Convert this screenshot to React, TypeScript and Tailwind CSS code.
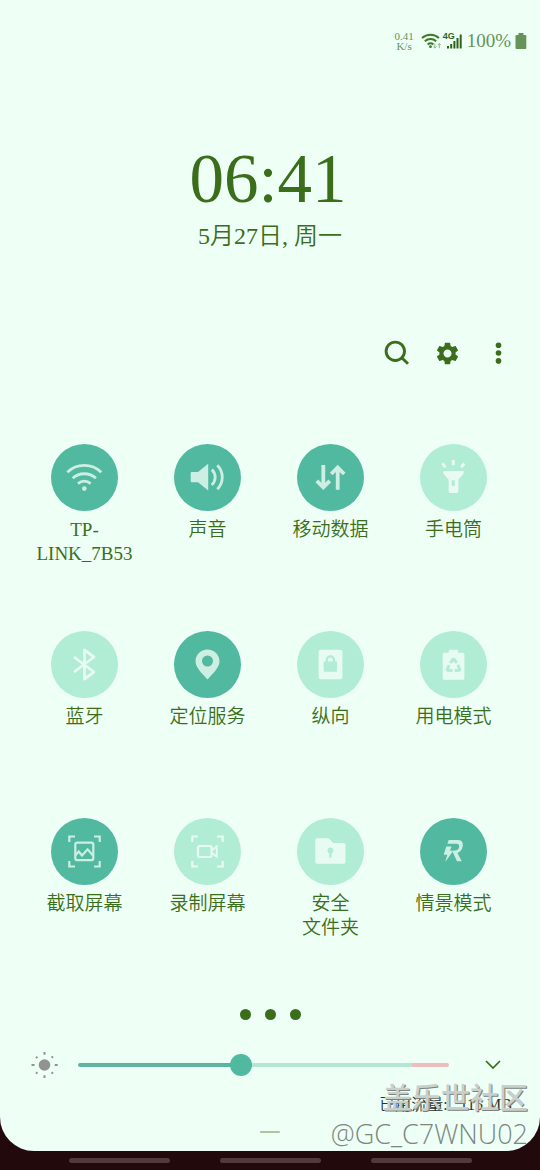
import React, { useState } from 'react';
import { MdSettings } from 'react-icons/md';

interface Tile {
  id: string;
  label: string[];
  active: boolean;
  icon: React.ReactNode;
}

const ON = '#51b9a0';
const OFF = '#b1ecd4';

const tiles: Tile[] = [
  {
    id: 'wifi',
    label: ['TP-', 'LINK_7B53'],
    active: true,
    icon: (
      <>
        <g fill="none" stroke="currentColor" strokeWidth="2.8">
          <path d="M16.3 28.3a24.5 24.5 0 0 1 34 0" />
          <path d="M21.7 34.3a17 17 0 0 1 23.2 0" />
          <path d="M27 39.6a9.5 9.5 0 0 1 12.6 0" />
        </g>
        <circle cx="33.3" cy="44.6" r="2.3" fill="currentColor" />
      </>
    ),
  },
  {
    id: 'sound',
    label: ['声音'],
    active: true,
    icon: (
      <>
        <path d="M17.7 28H24L34.2 19.8V46.5L24 38.3H17.7a1 1 0 0 1-1-1V29a1 1 0 0 1 1-1Z" fill="currentColor" />
        <g fill="none" stroke="currentColor" strokeWidth="2.8">
          <path d="M37.8 25.6a10.5 10.5 0 0 1 0 15.4" />
          <path d="M43.3 21.3a17 17 0 0 1 0 24" />
        </g>
      </>
    ),
  },
  {
    id: 'data',
    label: ['移动数据'],
    active: true,
    icon: (
      <g fill="none" stroke="currentColor" strokeWidth="3.8">
        <path d="M26.3 21v23M19.8 36.8l6.5 6.6 6.5-6.6" />
        <path d="M40.7 45.8v-23M34.2 30l6.5-6.6 6.5 6.6" />
      </g>
    ),
  },
  {
    id: 'torch',
    label: ['手电筒'],
    active: false,
    icon: (
      <>
        <path
          fillRule="evenodd"
          d="M23.8 27h19.4q.5 0 .5.6v1.2q0 1-.8 1.8L38.4 35.6V47q0 2-2 2h-5.8q-2 0-2-2V35.6L24.1 30.6q-.8-.8-.8-1.8v-1.2q0-.6.5-.6ZM31.7 36.3v5.7h3v-5.7Z"
          fill="currentColor"
        />
        <path d="M33.3 16v5.3M22.4 19.3l3 4M44.2 19.3l-3 4" stroke="currentColor" strokeWidth="2.8" />
      </>
    ),
  },
  {
    id: 'bluetooth',
    label: ['蓝牙'],
    active: false,
    icon: (
      <path
        d="M23 26 43 41 33.5 48V19L43 26 23 41"
        fill="none"
        stroke="currentColor"
        strokeWidth="2.8"
        strokeLinejoin="round"
      />
    ),
  },
  {
    id: 'location',
    label: ['定位服务'],
    active: true,
    icon: (
      <path
        fillRule="evenodd"
        d="M33.5 18.5c-6.8 0-12 5.2-12 11.7C21.5 37 29 43 33.5 48.5 38 43 45.5 37 45.5 30.2c0-6.5-5.2-11.7-12-11.7Zm0 6a5.5 5.5 0 1 1 0 11 5.5 5.5 0 0 1 0-11Z"
        fill="currentColor"
      />
    ),
  },
  {
    id: 'portrait',
    label: ['纵向'],
    active: false,
    icon: (
      <>
        <rect x="21.6" y="18.7" width="23.8" height="29.5" rx="1.8" fill="currentColor" />
        <rect x="26.7" y="30.6" width="13.4" height="10.2" rx="1" fill={OFF} />
        <path d="M29.9 31.5v-2.7a3.5 3.5 0 0 1 7 0v2.7" fill="none" stroke={OFF} strokeWidth="2.2" />
      </>
    ),
  },
  {
    id: 'power',
    label: ['用电模式'],
    active: false,
    icon: (
      <>
        <path
          d="M28.7 21.7v-2q0-1 1-1h7.4q1 0 1 1v2h4.8q1.5 0 1.5 1.5v24q0 1.5-1.5 1.5H24.2q-1.5 0-1.5-1.5v-24q0-1.5 1.5-1.5Z"
          fill="currentColor"
        />
        <g fill="none" stroke={OFF} strokeWidth="3" strokeLinejoin="round">
          <path d="M30.2 32.2 33 28.2h1l2.7 3.8" />
          <path d="M30.2 32.2 33 28.2h1l2.7 3.8" transform="rotate(120 33.5 35.2)" />
          <path d="M30.2 32.2 33 28.2h1l2.7 3.8" transform="rotate(240 33.5 35.2)" />
        </g>
      </>
    ),
  },
  {
    id: 'screenshot',
    label: ['截取屏幕'],
    active: true,
    icon: (
      <g fill="none" stroke="currentColor" strokeWidth="2.2">
        <path d="M18.3 24v-5.5H24M43 18.5h5.7V24M18.3 43v5.5H24M43 48.5h5.7V43" />
        <rect x="24.3" y="24.6" width="18" height="17.6" rx="2" />
        <path d="m24.5 37.3 3.2-3.8 3.3 4 5.6-6.2 5.6 6.5" />
      </g>
    ),
  },
  {
    id: 'record',
    label: ['录制屏幕'],
    active: false,
    icon: (
      <>
        <g fill="none" stroke="currentColor" strokeWidth="2.2">
          <path d="M18.3 24v-5.5H24M43 18.5h5.7V24M18.3 43v5.5H24M43 48.5h5.7V43" />
          <rect x="24" y="28" width="13.6" height="11" rx="1.8" />
        </g>
        <path d="M38 32.2 42.8 28.3v10.4L38 35" fill="none" stroke="currentColor" strokeWidth="1.8" />
      </>
    ),
  },
  {
    id: 'folder',
    label: ['安全', '文件夹'],
    active: false,
    icon: (
      <>
        <path
          d="M20 20.3h10.7q.8 0 1.4.5l4.2 4.2h10.5q1.7 0 1.7 1.7v17.3q0 1.7-1.7 1.7H20q-1.7 0-1.7-1.7V22q0-1.7 1.7-1.7Z"
          fill="currentColor"
        />
        <circle cx="33.4" cy="32.5" r="2.9" fill={OFF} />
        <path d="M33.4 33v6.6" stroke={OFF} strokeWidth="2.5" />
      </>
    ),
  },
  {
    id: 'routine',
    label: ['情景模式'],
    active: true,
    icon: (
      <g fill="currentColor">
        <path d="M28.7 22H37.5q5.7 0 5.3 5.3-.4 5.8-5.3 7.7L41.7 43.3H37L32.6 33.7 33.6 32.4H35.6q3.3-.4 3.6-4 .1-2.6-2.6-2.6H27.4Z" />
        <path d="M26.3 28.5H31.5L30 32.7H33.3L25.2 44 27.3 36.8H23.7Z" />
      </g>
    ),
  },
];

const StatusBar: React.FC = () => (
  <div className="flex h-[82px] items-center justify-end pr-[13px] text-[#649457]">
    <div className="mr-[7px] text-center text-[11px] leading-[10px]">
      <div>0.41</div>
      <div>K/s</div>
    </div>
    <svg width="22" height="18" viewBox="0 0 22 18" fill="none" stroke="#3d7a24" strokeWidth="2">
      <path d="M1 6a12.5 12.5 0 0 1 17 0M3.8 9.3a8.5 8.5 0 0 1 11.4 0M6.6 12.4a4.5 4.5 0 0 1 5.8 0" />
      <circle cx="9.5" cy="14.7" r="1.4" fill="#3d7a24" stroke="none" />
      <path
        d="M13.8 11.5v4.5M12.3 14.5l1.5 1.7 1.5-1.7M18.3 16.2v-4.5M16.8 13.2l1.5-1.7 1.5 1.7"
        stroke="#8fb888"
        strokeWidth="1"
      />
    </svg>
    <div className="relative h-[18px] w-5">
      <span className="absolute left-0 top-0 font-['Liberation_Sans'] text-[9px] leading-[9px] font-bold text-[#316317]">
        4G
      </span>
      <svg width="20" height="18" viewBox="0 0 20 18" fill="#316317">
        <path d="M4 14h2v2.5H4zM7.2 12h2v4.5h-2zM10.4 9h2v7.5h-2zM13.5 6h2v10.5h-2zM16.7 2.5h2v14h-2z" />
      </svg>
    </div>
    <span className="ml-1 text-[19px] leading-6">100%</span>
    <svg className="ml-1" width="12" height="18" viewBox="0 0 12 18" fill="currentColor">
      <path d="M3.5 1h5v2h1.8q1 0 1 1v12q0 1-1 1H1.5q-1 0-1-1V4q0-1 1-1h2Z" />
    </svg>
  </div>
);

const QuickTile: React.FC<{ tile: Tile; active: boolean; onToggle: () => void }> = ({ tile, active, onToggle }) => (
  <button type="button" aria-pressed={active} onClick={onToggle} className="flex flex-col items-center gap-[7px]">
    <span
      className={`block size-[67px] rounded-full ${active ? 'text-[#cdeee3]' : 'text-[#e8fbf3]'}`}
      style={{ backgroundColor: active ? ON : OFF }}
    >
      <svg viewBox="0 0 67 67" className="size-full">
        {tile.icon}
      </svg>
    </span>
    <span className="min-h-12 text-[19px] leading-6 font-[350] whitespace-nowrap">
      {tile.label.map((line) => (
        <span key={line} className="block">
          {line}
        </span>
      ))}
    </span>
  </button>
);

export default function App() {
  const [active, setActive] = useState<Record<string, boolean>>(
    Object.fromEntries(tiles.map((t) => [t.id, t.active]))
  );
  const [brightness, setBrightness] = useState(43.5);

  const track = `linear-gradient(to right, #5bb5a0 ${brightness}%, #b3e7d4 ${brightness}%, #b3e7d4 90%, #f0bdbd 90%)`;

  return (
    <div className="relative flex min-h-screen flex-col bg-[#21090c] font-['Liberation_Serif','Noto_Sans_CJK_SC',serif] text-[#3a6e1a]">
      <main className="flex-1 rounded-b-[34px] bg-[#eefff6]">
        <StatusBar />

        {/* Clock */}
        <header className="mt-[63px] pr-1 text-center">
          <h1 className="text-[69px] leading-[68px]">06:41</h1>
          <p className="mt-[7px] pl-1 text-[24px] leading-8 font-[350]">5月27日, 周一</p>
        </header>

        <div className="mt-[77px] flex justify-end pr-4">
          <button type="button" aria-label="搜索" className="flex h-12 w-[51px] items-center justify-center">
            <svg width="28" height="28" viewBox="0 0 28 28" fill="none" stroke="currentColor" strokeWidth="2.9">
              <circle cx="12.3" cy="12.3" r="9.2" />
              <path d="m18.7 18.7 6.3 6" />
            </svg>
          </button>
          <button type="button" aria-label="设置" className="flex h-12 w-[51px] items-center justify-center">
            <MdSettings size={27} />
          </button>
          <button type="button" aria-label="更多" className="flex h-12 w-[51px] items-center justify-center">
            <svg width="28" height="28" viewBox="0 0 28 28" fill="currentColor">
              <circle cx="13.5" cy="6.3" r="2.8" />
              <circle cx="13.5" cy="14" r="2.8" />
              <circle cx="13.5" cy="21.9" r="2.8" />
            </svg>
          </button>
        </div>

        {/* Quick settings */}
        <div className="mt-[67px] grid grid-cols-4 gap-y-[65px] pr-[25px] pl-[23px]">
          {tiles.map((tile) => (
            <QuickTile
              key={tile.id}
              tile={tile}
              active={active[tile.id]}
              onToggle={() => setActive((prev) => ({ ...prev, [tile.id]: !prev[tile.id] }))}
            />
          ))}
        </div>

        <div className="mt-[69px] flex justify-center gap-[14px]">
          <span className="size-[11px] rounded-full bg-current" />
          <span className="size-[11px] rounded-full bg-current" />
          <span className="size-[11px] rounded-full bg-current" />
        </div>

        {/* Brightness */}
        <div className="mt-[25px] flex h-10 items-center pr-8 pl-[31px]">
          <svg width="28" height="28" viewBox="0 0 28 28" fill="#929292" stroke="#929292" strokeWidth="2">
            <circle cx="13.5" cy="14" r="5.8" stroke="none" />
            <path d="M13.5 1v2.8M13.5 24.2V27M.5 14h3M23.7 14h3M5 5.7l1.4 1.4M20.6 21.2l1.4 1.4M22 5.4l-1.4 1.4M6.4 21.2 5 22.6" />
          </svg>
          <input
            type="range"
            aria-label="亮度"
            min={0}
            max={100}
            step={0.5}
            value={brightness}
            onChange={(e) => setBrightness(Number(e.target.value))}
            style={{ background: track }}
            className="ml-[19px] h-1 min-w-0 flex-1 appearance-none rounded-full [&::-webkit-slider-thumb]:size-[22px] [&::-webkit-slider-thumb]:appearance-none [&::-webkit-slider-thumb]:rounded-full [&::-webkit-slider-thumb]:bg-[#51b9a0]"
          />
          <button type="button" aria-label="展开" className="ml-7 flex h-10 w-[31px] items-center justify-center">
            <svg width="18" height="12" viewBox="0 0 18 12" fill="none" stroke="currentColor" strokeWidth="1.7">
              <path d="m2 2 7 7 7-7" />
            </svg>
          </button>
        </div>

        <p className="mt-3 pr-7 text-right text-[16px] leading-4 font-[350] whitespace-pre text-[#2a332c]">已用流量:   115 MB</p>
        <div className="mt-[18px] flex justify-center pb-[18px]">
          <span className="h-[2px] w-5 rounded-full bg-[#a9c6a0]" />
        </div>
      </main>

      <nav className="flex h-[19px] items-center justify-center gap-[50px]">
        <button type="button" aria-label="最近" className="h-[5px] w-[101px] rounded-full bg-[#503a3d]" />
        <button type="button" aria-label="主页" className="h-[5px] w-[101px] rounded-full bg-[#503a3d]" />
        <button type="button" aria-label="返回" className="h-[5px] w-[101px] rounded-full bg-[#503a3d]" />
      </nav>

      {/* Watermark */}
      <div className="pointer-events-none absolute right-3 bottom-[18px] text-right">
        <div className="font-['Noto_Sans_CJK_SC',sans-serif] text-[29px] leading-[40px] font-medium text-[#c9cfcb] [text-shadow:1px_1px_0_#7b837e]">
          盖乐世社区
        </div>
        <div className="font-['Open_Sans','Noto_Sans_CJK_SC',sans-serif] text-[27px] leading-[36px] font-[350] text-[#7c8781]">
          @GC_C7WNU02
        </div>
      </div>
    </div>
  );
}
